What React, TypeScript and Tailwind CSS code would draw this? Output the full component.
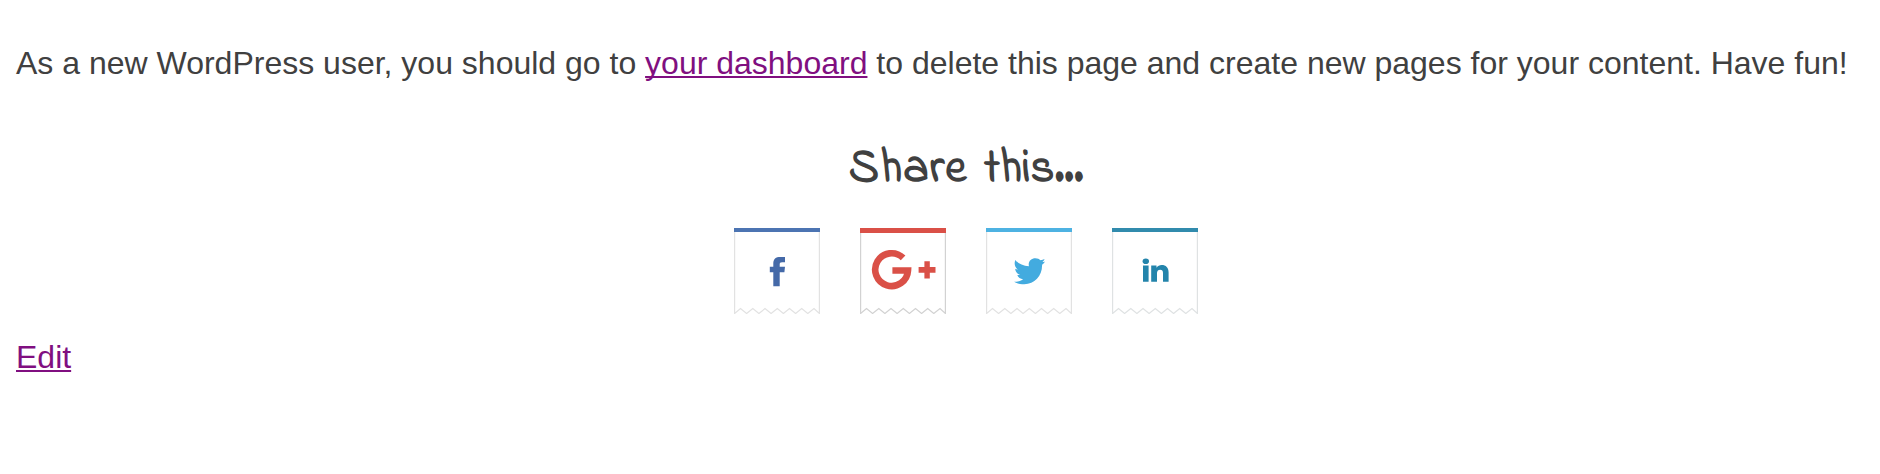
import type { ReactNode } from "react";

type Network = { name: string; color: string; bar: string; top: number; edge: string; glyph: ReactNode };

const networks: Network[] = [
  {
    name: "Facebook",
    color: "#4469a8",
    bar: "border-t-[#4c74b2] border-t-4",
    top: 4,
    edge: "#e2e2e2",
    glyph: (
      <path d="M39.3 58.2V44.2H35.8V38.8H39.3V35.6C39.3 30.8 41.7 28.9 46.4 28.9H51V34.3H48.1C46.2 34.3 45.7 35 45.7 36.6V38.8H51L50.4 44.2H45.7V58.2Z" />
    ),
  },
  {
    name: "Google Plus",
    color: "#da5047",
    bar: "border-t-[#da5047] border-t-5",
    top: 5,
    edge: "#d2d2d2",
    glyph: (
      <g transform="translate(.4 .3)">
        <path
          d="M42.7 29.6A16.4 16.4 0 1 0 47.6 42.2H32"
          fill="none"
          stroke="#da5047"
          strokeWidth="6.6"
        />
        <path d="M64 33h5.4v5.8h5.7v5.6h-5.7v5.8H64v-5.8h-5.8v-5.6H64Z" />
      </g>
    ),
  },
  {
    name: "Twitter",
    color: "#43abdf",
    bar: "border-t-[#4db2e2] border-t-4",
    top: 4,
    edge: "#e2e2e2",
    glyph: (
      <path
        transform="translate(.4 0)"
        d="M28.9 31.9C31.9 35.6 36.7 37.9 42.5 38.2C41.5 33.4 44.8 30.3 49 30.3C51.2 30.3 52.9 31.1 54.1 32.3C55.6 32.1 57 31.6 58.1 31C57.7 32.4 57 33.3 55.9 34.1C57 34 57.9 33.8 58.7 33.4C58 34.7 57 35.7 55.7 36.7C56 47.7 48.2 56.3 37.9 56.3C34.2 56.3 30.7 55.5 27.7 53.7C31.1 53.8 34.2 53 36.7 51.2C33.9 50.9 31.8 49.4 30.9 46.9C31.8 47.1 32.7 47.1 33.5 46.8C30.5 45.8 28.9 43.5 28.8 40.8C29.6 41.2 30.5 41.5 31.4 41.5C28.4 39.2 27.5 35.6 28.9 31.9Z"
      />
    ),
  },
  {
    name: "LinkedIn",
    color: "#2384ab",
    bar: "border-t-[#318bad] border-t-4",
    top: 4,
    edge: "#dfe2e3",
    glyph: (
      <>
        <ellipse cx="33.8" cy="33.2" rx="3.2" ry="2.8" />
        <path d="M31 37.5h5.6v16.2H31ZM39.2 37.5h5.3v2.2c1.2-1.7 3-2.6 5.2-2.6 4.2 0 6.9 2.6 6.9 7.3v9.3H51V45c0-2.2-1-3.3-2.8-3.3-1.9 0-3.2 1.2-3.2 3.3v8.7h-5.8Z" />
      </>
    ),
  },
];

function ShareTile({ network }: { network: Network }) {
  return (
    <a aria-label={network.name} className={`block h-[86px] w-[86px] ${network.bar}`}>
      <svg
        viewBox={`0 ${network.top} 86 ${86 - network.top}`}
        width="86"
        height={86 - network.top}
        fill={network.color}
        className="block"
      >
        <path
          d="M.6 4V85.5L6.5 80.6 12.6 85.5 18.8 80.6 24.9 85.5 31 80.6 37.1 85.5 43.3 80.6 49.4 85.5 55.5 80.6 61.6 85.5 67.7 80.6 73.8 85.5 80 80.6 85.4 85.5V4"
          fill="none"
          stroke={network.edge}
          strokeWidth="1.2"
        />
        {network.glyph}
      </svg>
    </a>
  );
}

export default function App() {
  return (
    <main className="h-[474px] overflow-hidden bg-white pt-[39px] pl-4 font-['Liberation_Sans',Arial,sans-serif] text-[32px] leading-[48px] text-[#404040]">
      <p className="whitespace-nowrap">
        As a new WordPress user, you should go to{" "}
        <a className="text-[#800f80] underline decoration-2 underline-offset-2 [text-decoration-skip-ink:none]">
          your dashboard
        </a>{" "}
        to delete this page and create new pages for your content. Have fun!
      </p>
      <section className="flex w-[1900px] flex-col items-center pt-[57px]">
        <h3 className="h-[52px] font-['Indie_Flower',cursive] text-[47px] leading-[52px] font-bold whitespace-nowrap [word-spacing:5px]">
          <span className="tracking-[1px]">Share</span> this...
        </h3>
        <div className="mt-8 flex gap-10">
          {networks.map((network) => (
            <ShareTile key={network.name} network={network} />
          ))}
        </div>
      </section>
      <p className="mt-[19px]">
        <a className="text-[#800f80] underline decoration-2 underline-offset-2 [text-decoration-skip-ink:none]">Edit</a>
      </p>
    </main>
  );
}
